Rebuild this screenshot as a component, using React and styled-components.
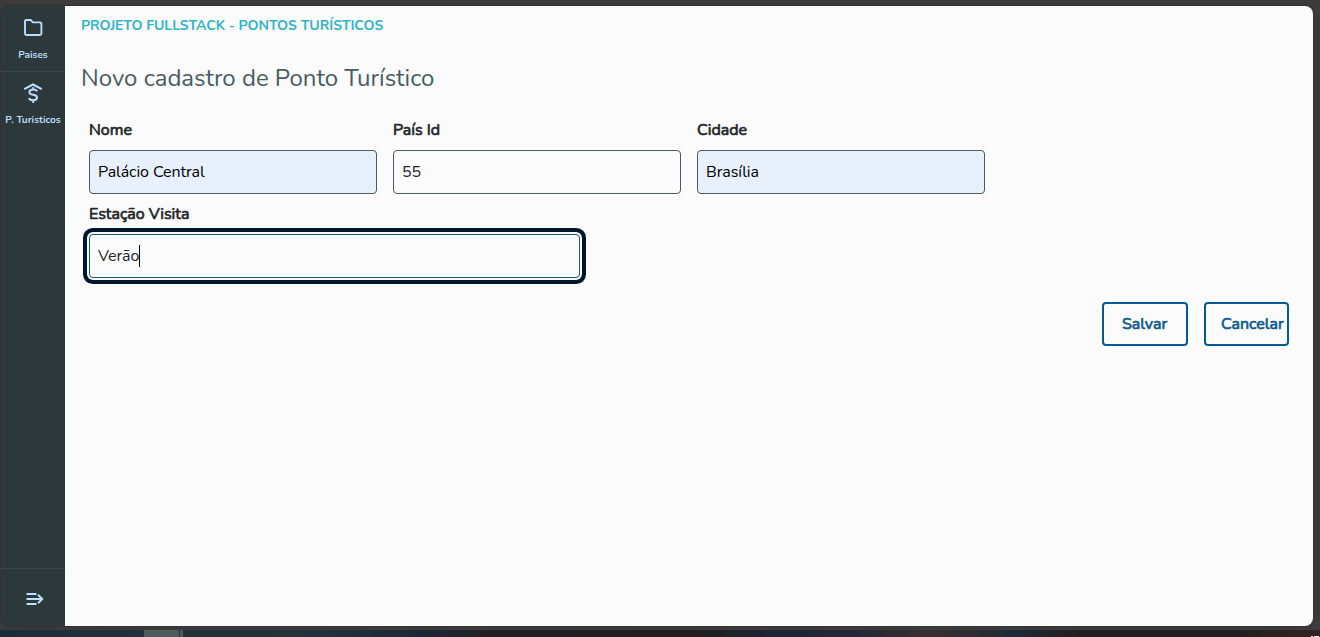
import React from 'react';
import styled, { createGlobalStyle } from 'styled-components';

const GlobalStyle = createGlobalStyle`
  *, *::before, *::after { box-sizing: border-box; }
  html, body { margin: 0; padding: 0; background: #3b3b3b; }
  body { font-family: Nunito, Lato, "Open Sans", sans-serif; font-size: 16px; color: #212529; overflow: hidden; }
`;

const Screen = styled.div`
  display: flex;
  flex-direction: column;
  width: 1320px;
  height: 637px;
  padding-top: 6px;
  background: #3b3b3b;
`;

const AppWindow = styled.div`
  display: flex;
  height: 620px;
  margin: 0 7px 4px 1px;
  flex: none;
  border-radius: 8px;
  overflow: hidden;
  box-shadow: 0 0 2px #252020;
`;

const Sidebar = styled.nav`
  display: flex;
  flex-direction: column;
  width: 64px;
  flex: none;
  background: #2d383a;
  color: #b9dffe;
`;

const NavItem = styled.a`
  display: flex;
  flex-direction: column;
  align-items: center;
  height: ${(p) => (p.$first ? 66 : 64)}px;
  padding-top: ${(p) => (p.$first ? 11 : 9)}px;
  border-bottom: ${(p) => (p.$first ? '1px solid #3c494c' : '0')};
`;

const NavLabel = styled.span`
  margin-top: ${(p) => p.$gap}px;
  font-size: 10px;
  line-height: 14px;
  font-weight: 700;
  white-space: nowrap;
`;

const Toggle = styled.div`
  display: flex;
  align-items: center;
  height: 58px;
  margin-top: auto;
  padding: 3px 0 0 23px;
  border-top: 1px solid #3c494c;
`;

const Main = styled.main`
  flex: 1;
  padding: 11px 16px 10px;
  background: #fbfbfb;
`;

const Brand = styled.div`
  height: 20px;
  font-size: 14px;
  line-height: 18px;
  font-weight: 700;
  color: #2fb5c7;
  letter-spacing: -0.02px;
`;

const Title = styled.h1`
  margin: 23px 0 0;
  height: 36px;
  font-size: 24px;
  line-height: 36px;
  font-weight: 400;
  color: #495c62;
`;

const Fields = styled.div`
  display: flex;
  flex-wrap: wrap;
  gap: 0 16px;
  margin-top: 22px;
  padding-left: 8px;
`;

const Field = styled.label`
  display: flex;
  flex-direction: column;
  width: ${(p) => p.$width}px;
  height: 84px;
  margin-right: ${(p) => p.$after || 0}px;
`;

const FieldLabel = styled.span`
  height: 32px;
  line-height: 25px;
  color: #24282b;
  -webkit-text-stroke: 0.7px #24282b;
`;

const Control = styled.div`
  display: flex;
  align-items: center;
  height: 44px;
  padding: 0 8px 1px;
  border: 1px solid ${(p) => (p.$focused ? '#105b8f' : '#495c62')};
  border-radius: 4px;
  background: ${(p) => (p.$filled ? '#e8f0fe' : '#fbfbfb')};
  color: ${(p) => (p.$filled ? '#000' : '#212529')};
  letter-spacing: -0.08px;
  ${(p) => p.$focused && 'box-shadow: 0 0 0 2px #fbfbfb, 0 0 0 6px #01162b;'}
`;

const Caret = styled.i`
  width: 1px;
  height: 22px;
  margin-left: -0.6px;
  background: #000;
`;

const Actions = styled.div`
  display: flex;
  justify-content: flex-end;
  gap: 16px;
  margin-top: 16px;
  padding-right: 8px;
`;

const Button = styled.button`
  width: ${(p) => p.$width}px;
  height: 44px;
  padding: 0 0 1px ${(p) => p.$pad}px;
  border: 2px solid #005b96;
  border-radius: 4px;
  background: #fbfbfb;
  color: #105b8f;
  font: 400 16px Nunito, Lato, "Open Sans", sans-serif;
  -webkit-text-stroke: 0.7px #105b8f;
  text-align: left;
  white-space: nowrap;
`;

const Taskbar = styled.div`
  display: flex;
  height: 7px;
  padding-left: 144px;
  background: linear-gradient(90deg, #192d38 0, #213339 190px, #20343a 300px, #1b2838 410px, #211f21 500px, #201d1e 690px, #1c2634 780px, #232734 850px, #392f31 930px, #1e2b35 1010px, #211f20 1080px, #211f20 1230px, #332524 1320px);
`;

const Task = styled.div`
  width: ${(p) => p.$width}px;
  margin-right: 1px;
  background: #4d5b5d;
`;

const Clock = styled.div`
  display: flex;
  align-items: flex-end;
  gap: 1px;
  margin-left: auto;
  padding-right: 1px;
`;

const ClockMark = styled.i`
  width: ${(p) => p.$width}px;
  height: 1px;
  background: #e8e8e8;
`;

const FolderIcon = () => (
  <svg width="22" height="22" viewBox="0 0 22 22" fill="none" stroke="#b9dffe" strokeWidth="1.9" strokeLinejoin="round">
    <path d="M3 4.3C3 3.5 3.5 3 4.3 3H8.6L11 5.4H17.8C18.8 5.4 19.4 6 19.4 6.9V16.5C19.4 17.4 18.8 18 17.9 18H4.4C3.5 18 3 17.4 3 16.5Z" />
  </svg>
);

const MoneyRoofIcon = () => (
  <svg width="22" height="24" viewBox="0 0 22 24" fill="none" stroke="#b9dffe" strokeWidth="2">
    <path d="M2.2 8.2L11 3.5L19.8 8.2" />
    <path d="M15.2 10.3C14.5 9.2 13 8.6 11.3 8.6C9 8.6 7.4 9.6 7.4 11.3C7.4 15 15 12.7 15 16.5C15 18.3 13.4 19.2 11.2 19.2C9.2 19.2 7.5 18.5 6.8 17.2M11.2 6.3V9M11.2 19V22" />
  </svg>
);

const ExpandIcon = () => (
  <svg width="22" height="20" viewBox="0 0 22 20" fill="none" stroke="#b9dffe" strokeWidth="2">
    <path d="M2.5 5H12.5M2.5 10H18.5M2.5 15H12.5M14 5.8L18.2 10L14 14.2" />
  </svg>
);

export default function App() {
  return (
    <>
      <GlobalStyle />
      <Screen>
        <AppWindow>
          <Sidebar>
            <NavItem $first>
              <FolderIcon />
              <NavLabel $gap={9}>Paises</NavLabel>
            </NavItem>
            <NavItem>
              <MoneyRoofIcon />
              <NavLabel $gap={8}>P. Turisticos</NavLabel>
            </NavItem>
            <Toggle><ExpandIcon /></Toggle>
          </Sidebar>
          <Main>
            <Brand>PROJETO FULLSTACK - PONTOS TURÍSTICOS</Brand>
            <Title>Novo cadastro de Ponto Turístico</Title>
            <Fields>
              <Field $width={288}>
                <FieldLabel>Nome</FieldLabel>
                <Control $filled>Palácio Central</Control>
              </Field>
              <Field $width={288}>
                <FieldLabel>País Id</FieldLabel>
                <Control>55</Control>
              </Field>
              <Field $width={288} $after={200}>
                <FieldLabel>Cidade</FieldLabel>
                <Control $filled>Brasília</Control>
              </Field>
              <Field $width={491}>
                <FieldLabel>Estação Visita</FieldLabel>
                <Control $focused>Verão<Caret /></Control>
              </Field>
            </Fields>
            <Actions>
              <Button $width={86} $pad={18}>Salvar</Button>
              <Button $width={85} $pad={15}>Cancelar</Button>
            </Actions>
          </Main>
        </AppWindow>
        <Taskbar>
          <Task $width={35} />
          <Task $width={3} />
          <Clock><ClockMark $width={2} /><ClockMark $width={5} /></Clock>
        </Taskbar>
      </Screen>
    </>
  );
}
